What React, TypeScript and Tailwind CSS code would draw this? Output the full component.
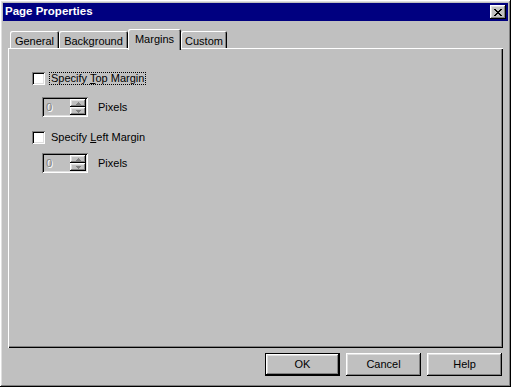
import React from "react";

const raised =
  "shadow-[inset_-1px_-1px_#000,inset_1px_1px_#fff,inset_-2px_-2px_#808080,inset_2px_2px_#dfdfdf]";
const sunken =
  "shadow-[inset_1px_1px_#808080,inset_-1px_-1px_#fff,inset_2px_2px_#000,inset_-2px_-2px_#dfdfdf]";

const xPixels: [number, number, number][] = [
  [0, 0, 2], [6, 0, 2],
  [1, 1, 2], [5, 1, 2],
  [2, 2, 4],
  [3, 3, 2],
  [2, 4, 4],
  [1, 5, 2], [5, 5, 2],
  [0, 6, 2], [6, 6, 2],
];

function Checkbox() {
  return <div className={`w-[13px] h-[13px] bg-white shrink-0 ${sunken}`} />;
}

function Spinner() {
  return (
    <div className="flex items-center gap-[10px]">
      <div className={`w-[46px] h-[20px] bg-[#c0c0c0] flex items-stretch p-[2px] ${sunken}`}>
        <div className="flex-1 pl-[2px] text-[#808080] leading-[16px] [text-shadow:1px_1px_#fff]">0</div>
        <div className="w-[16px] flex flex-col">
          <div className={`flex-1 flex items-center justify-center ${raised}`}>
            <svg width="5" height="3" viewBox="0 0 5 3" shapeRendering="crispEdges">
              <rect x="2" y="0" width="1" height="1" fill="#808080" />
              <rect x="1" y="1" width="3" height="1" fill="#808080" />
              <rect x="0" y="2" width="5" height="1" fill="#808080" />
            </svg>
          </div>
          <div className={`flex-1 flex items-center justify-center ${raised}`}>
            <svg width="5" height="3" viewBox="0 0 5 3" shapeRendering="crispEdges">
              <rect x="0" y="0" width="5" height="1" fill="#808080" />
              <rect x="1" y="1" width="3" height="1" fill="#808080" />
              <rect x="2" y="2" width="1" height="1" fill="#808080" />
            </svg>
          </div>
        </div>
      </div>
      <span>Pixels</span>
    </div>
  );
}

function Tab({ label, w, selected }: { label: string; w: string; selected?: boolean }) {
  if (selected) {
    return (
      <div
        className={`${w} h-[21px] -mb-[2px] relative z-10 bg-[#c0c0c0] flex justify-center pt-[2px] rounded-t-[2px] shadow-[inset_1px_1px_#fff,inset_-1px_0_#000,inset_-2px_0_#808080]`}
      >
        {label}
      </div>
    );
  }
  return (
    <div
      className={`${w} h-[17px] flex justify-center pt-[2px] rounded-t-[2px] shadow-[inset_1px_1px_#fff,inset_-1px_0_#000,inset_-2px_0_#808080]`}
    >
      {label}
    </div>
  );
}

function Button({ label, def }: { label: string; def?: boolean }) {
  if (def) {
    return (
      <div className="w-[75px] h-[23px] border border-black">
        <div className={`w-full h-full flex items-center justify-center ${raised}`}>{label}</div>
      </div>
    );
  }
  return (
    <div className={`w-[75px] h-[23px] flex items-center justify-center ${raised}`}>{label}</div>
  );
}

export default function App() {
  return (
    <div
      className={`w-[511px] h-[387px] bg-[#c0c0c0] p-[3px] flex flex-col text-[11px] text-black ${raised}`}
      style={{ fontFamily: '"Liberation Sans", Arial, sans-serif' }}
    >
      <div className="h-[18px] bg-[#000080] flex items-center justify-between pl-[2px] pr-[2px]">
        <span className="text-white font-bold text-[11.5px]">Page Properties</span>
        <div className={`w-[16px] h-[14px] bg-[#c0c0c0] flex items-center justify-center ${raised}`}>
          <svg width="8" height="7" viewBox="0 0 8 7" shapeRendering="crispEdges">
            {xPixels.map(([x, y, w], i) => (
              <rect key={i} x={x} y={y} width={w} height={1} fill="#000" />
            ))}
          </svg>
        </div>
      </div>

      <div className="mt-[8px] ml-[5px] mr-[5px] flex flex-col">
        <div className="flex items-end h-[19px] pl-[2px]">
          <Tab label="General" w="w-[49px]" />
          <Tab label="Background" w="w-[69px]" />
          <Tab label="Margins" w="w-[53px]" selected />
          <Tab label="Custom" w="w-[46px]" />
        </div>
        <div
          className={`h-[300px] pl-[24px] pt-[24px] flex flex-col shadow-[inset_1px_1px_#fff,inset_-1px_-1px_#000,inset_-2px_-2px_#808080]`}
        >
          <div className="flex items-center gap-[4px] h-[13px]">
            <Checkbox />
            <span className="border border-dotted border-black px-[1px] leading-[11px]">
              Specify <u>T</u>op Margin
            </span>
          </div>
          <div className="mt-[12px] ml-[10px]">
            <Spinner />
          </div>
          <div className="mt-[14px] flex items-center gap-[4px] h-[13px]">
            <Checkbox />
            <span className="px-[2px]">
              Specify <u>L</u>eft Margin
            </span>
          </div>
          <div className="mt-[9px] ml-[10px]">
            <Spinner />
          </div>
        </div>
      </div>

      <div className="mt-[5px] mr-[6px] flex justify-end gap-[6px]">
        <Button label="OK" def />
        <Button label="Cancel" />
        <Button label="Help" />
      </div>
    </div>
  );
}
